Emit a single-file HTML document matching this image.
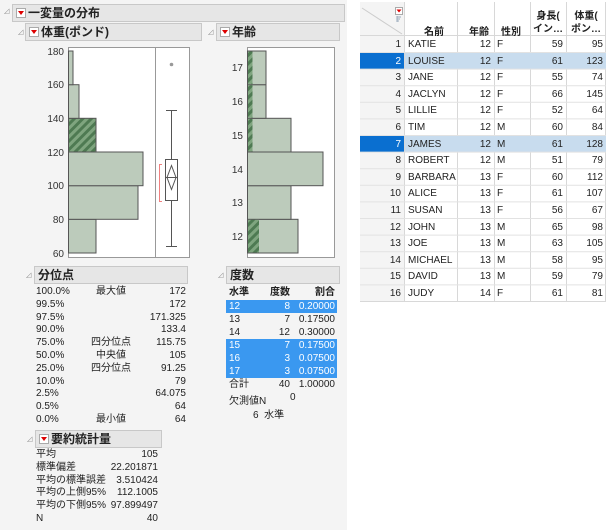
<!DOCTYPE html>
<html><head><meta charset="utf-8"><style>
*{margin:0;padding:0;box-sizing:border-box}
body{width:606px;height:530px;background:#fff;font-family:"Liberation Sans","Noto Sans CJK JP",sans-serif;font-size:10px;color:#222;position:relative;overflow:hidden}
.a{position:absolute;white-space:nowrap}
.hdr{position:absolute;background:#e6e6e6;border:1px solid #c8c8c8;font-weight:bold;font-size:12px;line-height:16px;padding-left:3px}
.tri{position:absolute;font-size:7px;color:#888}
.dd{display:inline-block;width:10px;height:10px;border:1px solid #aaa;background:#fff;vertical-align:-1px;margin-right:2px;position:relative}
.dd:after{content:"";position:absolute;left:1px;top:2px;border-left:3px solid transparent;border-right:3px solid transparent;border-top:4px solid #d00}
.r{text-align:right}
.fr{position:absolute;left:226px;width:111px;height:13px;line-height:13px}
.fr span{position:absolute;top:0}
.c1{left:3px}.c2{right:47px}.c3{right:2px}
.blue{background:#3a98f0;color:#fff}
</style></head><body>
<div class="a" style="left:0;top:0;width:347px;height:530px;background:#f4f4f4"></div>

<span class="tri" style="left:4px;top:7px">◿</span>
<div class="hdr" style="left:12px;top:4px;width:333px;height:18px"><span class="dd"></span>一変量の分布</div>
<span class="tri" style="left:18px;top:28px">◿</span>
<div class="hdr" style="left:25px;top:23px;width:177px;height:18px"><span class="dd"></span>体重(ポンド)</div>
<span class="tri" style="left:208px;top:28px">◿</span>
<div class="hdr" style="left:216px;top:23px;width:124px;height:18px"><span class="dd"></span>年齢</div>

<svg class="a" style="left:0;top:0" width="347" height="265">
<defs><pattern id="h" width="6" height="6" patternUnits="userSpaceOnUse" patternTransform="rotate(45)"><rect width="6" height="6" fill="#4e7a52"/><rect width="3" height="6" fill="#7fa57f"/></pattern></defs>
<rect x="68.5" y="47.5" width="121" height="210" fill="#fff" stroke="#999"/>
<line x1="155.5" y1="47" x2="155.5" y2="258" stroke="#999"/>
<g stroke="#555" stroke-width="1" fill="#bccbbb">
<rect x="68.5" y="219.3" width="27.5" height="33.7"/>
<rect x="68.5" y="185.7" width="69.5" height="33.6"/>
<rect x="68.5" y="152" width="74.5" height="33.7"/>
<rect x="68.5" y="118.3" width="27.5" height="33.7" fill="url(#h)"/>
<rect x="68.5" y="84.7" width="10.5" height="33.6"/>
<rect x="68.5" y="51" width="4.5" height="33.7"/>
</g>
<g font-size="10" fill="#333" text-anchor="end">
<text x="64" y="55">180</text><text x="64" y="88">160</text><text x="64" y="122">140</text><text x="64" y="156">120</text><text x="64" y="189">100</text><text x="64" y="223">80</text><text x="64" y="257">60</text>
</g>
<g stroke="#555" fill="none">
<line x1="171.5" y1="110.5" x2="171.5" y2="159"/><line x1="171.5" y1="200.5" x2="171.5" y2="246.5"/>
<line x1="166" y1="110.5" x2="177" y2="110.5"/><line x1="166" y1="246.5" x2="177" y2="246.5"/>
<rect x="165.5" y="159.5" width="12" height="41" fill="#fff"/>
<line x1="165.5" y1="177.5" x2="177.5" y2="177.5"/>
<polygon points="171.5,165.5 176,177.5 171.5,189.5 167,177.5"/>
</g>
<path d="M162 164.5h-2.5v37h2.5" stroke="#f08080" fill="none"/>
<circle cx="171.5" cy="64.5" r="1.8" fill="#999"/>

<rect x="247.5" y="47.5" width="87" height="210" fill="#fff" stroke="#999"/>
<g stroke="#555" fill="#bccbbb">
<rect x="247.5" y="219.3" width="50.5" height="33.7"/>
<rect x="247.5" y="185.7" width="43.5" height="33.6"/>
<rect x="247.5" y="152" width="75.5" height="33.7"/>
<rect x="247.5" y="118.3" width="43.5" height="33.7"/>
<rect x="247.5" y="84.7" width="18.5" height="33.6"/>
<rect x="247.5" y="51" width="18.5" height="33.7"/>
</g>
<g stroke="none" fill="url(#h)">
<rect x="248" y="219.8" width="11" height="32.7"/>
<rect x="248" y="118.8" width="4.5" height="32.7"/>
<rect x="248" y="85.2" width="4.5" height="32.6"/>
<rect x="248" y="51.5" width="4.5" height="32.7"/>
</g>
<g font-size="10" fill="#333" text-anchor="end">
<text x="243" y="240">12</text><text x="243" y="206">13</text><text x="243" y="173">14</text><text x="243" y="139">15</text><text x="243" y="105">16</text><text x="243" y="71">17</text>
</g>
</svg>

<span class="tri" style="left:26px;top:271px">◿</span>
<div class="hdr" style="left:34px;top:266px;width:154px;height:18px">分位点</div>
<div class="a" style="left:36px;top:286px;width:150px;line-height:12.8px">
<div style="position:relative;height:141px">
<div class="a" style="left:0;top:0">100.0%<br>99.5%<br>97.5%<br>90.0%<br>75.0%<br>50.0%<br>25.0%<br>10.0%<br>2.5%<br>0.5%<br>0.0%</div>
<div class="a" style="left:40px;top:0;width:70px;text-align:center">最大値<br><br><br><br>四分位点<br>中央値<br>四分位点<br><br><br><br>最小値</div>
<div class="a r" style="right:0;top:0">172<br>172<br>171.325<br>133.4<br>115.75<br>105<br>91.25<br>79<br>64.075<br>64<br>64</div>
</div></div>

<span class="tri" style="left:27px;top:435px">◿</span>
<div class="hdr" style="left:35px;top:430px;width:127px;height:18px"><span class="dd"></span>要約統計量</div>
<div class="a" style="left:36px;top:449px;line-height:12.8px">平均<br>標準偏差<br>平均の標準誤差<br>平均の上側95%<br>平均の下側95%<br>N</div>
<div class="a r" style="left:100px;top:449px;width:58px;line-height:12.8px">105<br>22.201871<br>3.510424<br>112.1005<br>97.899497<br>40</div>

<span class="tri" style="left:218px;top:271px">◿</span>
<div class="hdr" style="left:226px;top:266px;width:114px;height:18px">度数</div>
<div class="fr" style="top:286px;font-weight:bold"><span class="c1">水準</span><span class="c2">度数</span><span class="c3">割合</span></div>
<div class="fr blue" style="top:300px"><span class="c1">12</span><span class="c2">8</span><span class="c3">0.20000</span></div>
<div class="fr" style="top:313px"><span class="c1">13</span><span class="c2">7</span><span class="c3">0.17500</span></div>
<div class="fr" style="top:326px"><span class="c1">14</span><span class="c2">12</span><span class="c3">0.30000</span></div>
<div class="fr blue" style="top:339px"><span class="c1">15</span><span class="c2">7</span><span class="c3">0.17500</span></div>
<div class="fr blue" style="top:352px"><span class="c1">16</span><span class="c2">3</span><span class="c3">0.07500</span></div>
<div class="fr blue" style="top:365px"><span class="c1">17</span><span class="c2">3</span><span class="c3">0.07500</span></div>
<div class="fr" style="top:378px"><span class="c1">合計</span><span class="c2">40</span><span class="c3">1.00000</span></div>
<div class="a" style="left:229px;top:392px">欠測値N</div><div class="a" style="left:290px;top:392px">0</div>
<div class="a" style="left:253px;top:406px">6&nbsp; 水準</div>

<!-- data table -->
<div class="a" style="left:360px;top:2px;width:246px;height:300px">
<svg class="a" style="left:0;top:0" width="246" height="300">
<rect x="0" y="0" width="44" height="300" fill="#f4f4f4"/>
<g stroke="#d8d8d8">
<line x1="44.5" y1="0" x2="44.5" y2="300"/><line x1="97.5" y1="0" x2="97.5" y2="300"/><line x1="134.5" y1="0" x2="134.5" y2="300"/><line x1="170.5" y1="0" x2="170.5" y2="300"/><line x1="206.5" y1="0" x2="206.5" y2="300"/><line x1="245.5" y1="0" x2="245.5" y2="300"/>
<line x1="0" y1="33.5" x2="246" y2="33.5"/>
<line x1="0" y1="299.5" x2="246" y2="299.5"/>
<line x1="2" y1="6" x2="42" y2="32" stroke="#ccc"/>
</g>
<rect x="0" y="50.6" width="44" height="16.6" fill="#0a6fd0"/>
<rect x="45" y="50.6" width="201" height="16.6" fill="#c8dcee"/>
<rect x="0" y="133.6" width="44" height="16.6" fill="#0a6fd0"/>
<rect x="45" y="133.6" width="201" height="16.6" fill="#c8dcee"/>
<g stroke="#e2e2e2">
<line x1="0" y1="50.5" x2="246" y2="50.5"/><line x1="0" y1="67.1" x2="246" y2="67.1"/><line x1="0" y1="83.7" x2="246" y2="83.7"/><line x1="0" y1="100.3" x2="246" y2="100.3"/><line x1="0" y1="116.9" x2="246" y2="116.9"/><line x1="0" y1="133.5" x2="246" y2="133.5"/><line x1="0" y1="150.1" x2="246" y2="150.1"/><line x1="0" y1="166.7" x2="246" y2="166.7"/><line x1="0" y1="183.3" x2="246" y2="183.3"/><line x1="0" y1="199.9" x2="246" y2="199.9"/><line x1="0" y1="216.5" x2="246" y2="216.5"/><line x1="0" y1="233.1" x2="246" y2="233.1"/><line x1="0" y1="249.7" x2="246" y2="249.7"/><line x1="0" y1="266.3" x2="246" y2="266.3"/><line x1="0" y1="282.9" x2="246" y2="282.9"/>
</g>
<rect x="35.5" y="5.5" width="7" height="7" fill="#fff" stroke="#aaa"/><path d="M36.5 7.5h5l-2.5 3z" fill="#d00"/>
<path d="M37 14v6M37 15h4M37 17h3M37 19h2" stroke="#9ab" stroke-width="1"/>
</svg>
<div class="a" style="left:64px;top:21px;font-weight:bold">名前</div>
<div class="a" style="left:109px;top:21px;font-weight:bold">年齢</div>
<div class="a" style="left:141px;top:21px;font-weight:bold">性別</div>
<div class="a r" style="left:171px;top:8px;width:34px;font-weight:bold;line-height:13px;text-align:center">身長(<br>イン…</div>
<div class="a r" style="left:207px;top:8px;width:38px;font-weight:bold;line-height:13px;text-align:center">体重(<br>ポン…</div>
<div class="a r" style="left:0;top:35px;width:41px;line-height:16.6px">1<br><span style="color:#fff">2</span><br>3<br>4<br>5<br>6<br><span style="color:#fff">7</span><br>8<br>9<br>10<br>11<br>12<br>13<br>14<br>15<br>16</div>
<div class="a" style="left:48px;top:35px;line-height:16.6px">KATIE<br>LOUISE<br>JANE<br>JACLYN<br>LILLIE<br>TIM<br>JAMES<br>ROBERT<br>BARBARA<br>ALICE<br>SUSAN<br>JOHN<br>JOE<br>MICHAEL<br>DAVID<br>JUDY</div>
<div class="a r" style="left:98px;top:35px;width:33px;line-height:16.6px">12<br>12<br>12<br>12<br>12<br>12<br>12<br>12<br>13<br>13<br>13<br>13<br>13<br>13<br>13<br>14</div>
<div class="a" style="left:137px;top:35px;line-height:16.6px">F<br>F<br>F<br>F<br>F<br>M<br>M<br>M<br>F<br>F<br>F<br>M<br>M<br>M<br>M<br>F</div>
<div class="a r" style="left:171px;top:35px;width:32px;line-height:16.6px">59<br>61<br>55<br>66<br>52<br>60<br>61<br>51<br>60<br>61<br>56<br>65<br>63<br>58<br>59<br>61</div>
<div class="a r" style="left:207px;top:35px;width:36px;line-height:16.6px">95<br>123<br>74<br>145<br>64<br>84<br>128<br>79<br>112<br>107<br>67<br>98<br>105<br>95<br>79<br>81</div>
</div>
</body></html>
